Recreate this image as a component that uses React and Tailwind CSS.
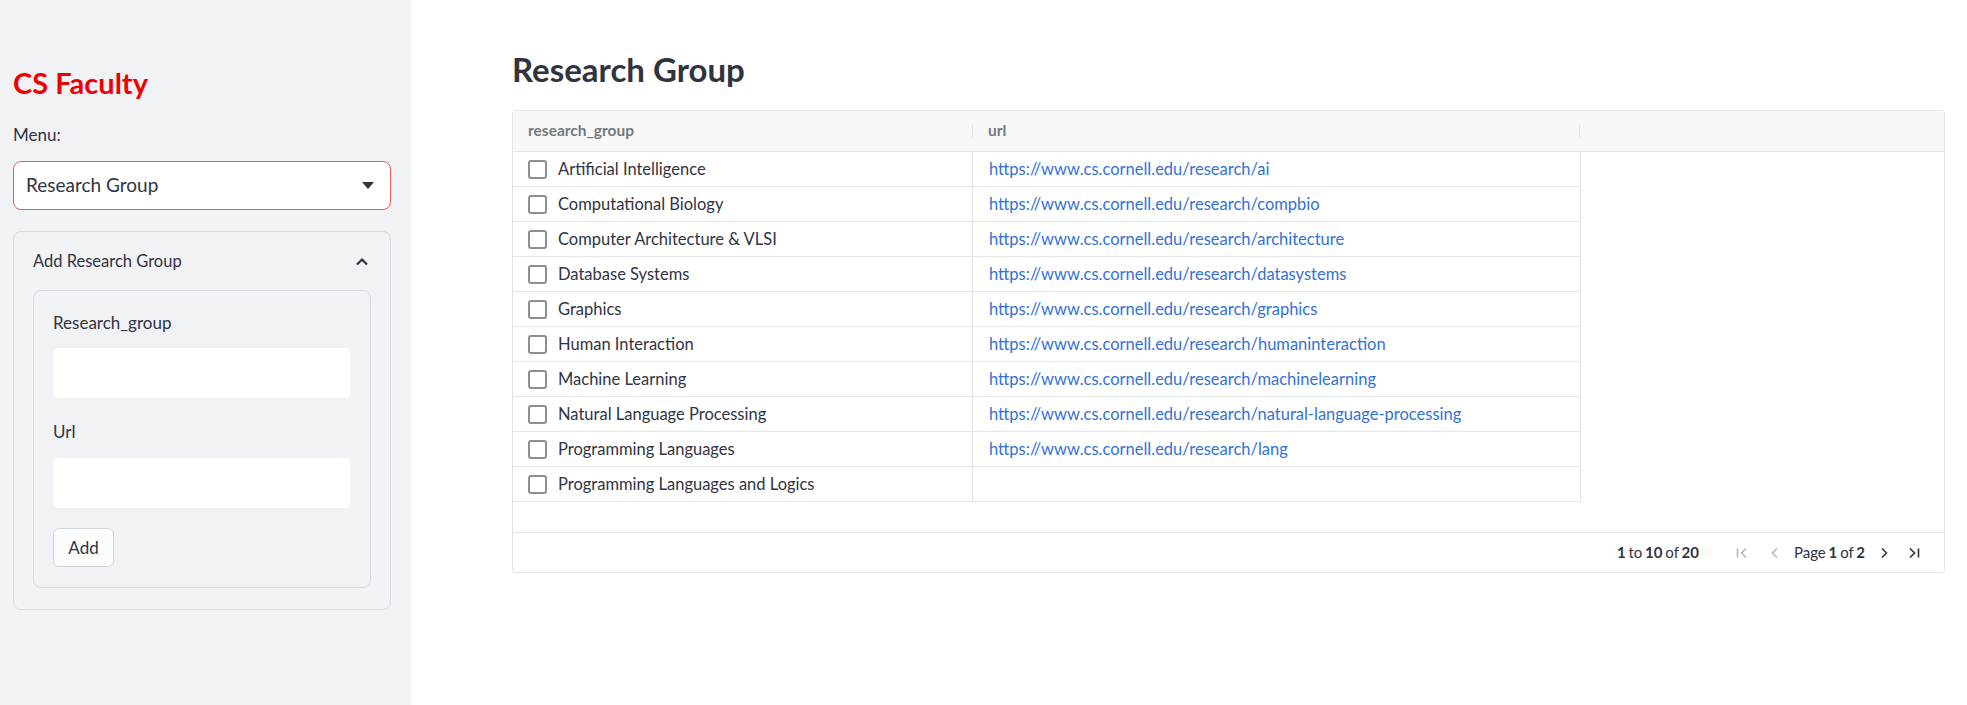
import React, { useState } from 'react';

const groups = [
  { name: 'Artificial Intelligence', url: 'https://www.cs.cornell.edu/research/ai' },
  { name: 'Computational Biology', url: 'https://www.cs.cornell.edu/research/compbio' },
  { name: 'Computer Architecture & VLSI', url: 'https://www.cs.cornell.edu/research/architecture' },
  { name: 'Database Systems', url: 'https://www.cs.cornell.edu/research/datasystems' },
  { name: 'Graphics', url: 'https://www.cs.cornell.edu/research/graphics' },
  { name: 'Human Interaction', url: 'https://www.cs.cornell.edu/research/humaninteraction' },
  { name: 'Machine Learning', url: 'https://www.cs.cornell.edu/research/machinelearning' },
  { name: 'Natural Language Processing', url: 'https://www.cs.cornell.edu/research/natural-language-processing' },
  { name: 'Programming Languages', url: 'https://www.cs.cornell.edu/research/lang' },
  { name: 'Programming Languages and Logics', url: '' },
];

const Sidebar = () => {
  const [open, setOpen] = useState(true);
  const [group, setGroup] = useState('');
  const [url, setUrl] = useState('');

  return (
    <aside className="w-[411px] shrink-0 bg-[#f0f2f6] pl-[13px] pr-[20px] pt-[65px]">
      <h1 className="h-[36px] leading-[36px] text-[29px] font-bold text-[#ee0000]">CS Faculty</h1>

      <div className="mt-[22px] h-[24px] leading-[24px] text-[17px]">Menu:</div>

      {/* Select */}
      <div className="mt-[14px] h-[49px] flex items-center justify-between bg-white border border-[#e35d5d] rounded-[8px] pl-[12px] pr-[16px]">
        <span className="text-[19px]">Research Group</span>
        <svg width="12" height="7" viewBox="0 0 12 7" className="text-[#31333f]">
          <path d="M0 0h12L6 7z" fill="currentColor" />
        </svg>
      </div>

      {/* Expander */}
      <div className="mt-[21px] border border-[#d6d8dd] rounded-[8px]">
        <button
          onClick={() => setOpen(!open)}
          className="w-full h-[58px] flex items-center justify-between pl-[19px] pr-[21px] text-[16.5px] text-[#31333f]"
        >
          <span>Add Research Group</span>
          <svg width="14" height="9" viewBox="0 0 14 9" fill="none">
            <path d="M2 7.5 7 2.5l5 5" stroke="#31333f" strokeWidth="2.2" />
          </svg>
        </button>
        {open && (
          <div className="px-[19px] pb-[21px]">
            <div className="border border-[#d6d8dd] rounded-[8px] px-[19px] pt-[20px] pb-[20px]">
              <div className="h-[24px] leading-[24px] text-[17px]">Research_group</div>
              <input
                value={group}
                onChange={(e) => setGroup(e.target.value)}
                className="mt-[13px] block w-full h-[50px] bg-white rounded-[6px] px-3 outline-none"
              />
              <div className="mt-[22px] h-[24px] leading-[24px] text-[17px]">Url</div>
              <input
                value={url}
                onChange={(e) => setUrl(e.target.value)}
                className="mt-[14px] block w-full h-[50px] bg-white rounded-[6px] px-3 outline-none"
              />
              <button className="mt-[20px] w-[61px] h-[39px] bg-[#fcfcfd] border border-[#d3d5da] rounded-[6px] text-[17px]">
                Add
              </button>
            </div>
          </div>
        )}
      </div>
    </aside>
  );
};

const PagerIcon = ({ d, muted }) => (
  <svg width="16" height="16" viewBox="0 0 16 16" fill="none">
    <path d={d} stroke={muted ? '#b4b7bd' : '#31333f'} strokeWidth="1.6" />
  </svg>
);

const Grid = () => (
  <div className="mt-[19px] border border-[#e3e5e9] rounded-[3px]">
    {/* Header */}
    <div className="h-[41px] flex bg-[#f8f8f9] border-b border-[#e3e5e9] text-[15.5px] font-bold text-[#75787e]">
      <div className="w-[459px] flex items-center pl-[15px]">research_group</div>
      <div className="w-[608px] flex items-center pl-[16px] relative">
        <span className="absolute left-0 top-[13px] h-[14px] w-px bg-[#e3e5e9]" />
        url
        <span className="absolute right-0 top-[13px] h-[14px] w-px bg-[#e3e5e9]" />
      </div>
    </div>

    {/* Rows */}
    <div className="w-[1068px] border-r border-[#e3e5e9]">
      {groups.map((g) => (
        <div key={g.name} className="h-[35px] flex border-b border-[#e3e5e9] text-[16.5px]">
          <div className="w-[459px] flex items-center pl-[15px]">
            <span className="w-[19px] h-[19px] border-2 border-[#8c8e92] rounded-[3px] mr-[11px]" />
            {g.name}
          </div>
          <div className="flex-1 flex items-center pl-[16px] border-l border-[#e3e5e9] text-[#3372d4]">
            {g.url}
          </div>
        </div>
      ))}
    </div>

    <div className="h-[30px]" />

    {/* Footer */}
    <div className="h-[40px] border-t border-[#e3e5e9] flex items-center justify-end pr-[22px] text-[15px] text-[#31333f] [word-spacing:-1px]">
      <span>
        <b>1</b> to <b>10</b> of <b>20</b>
      </span>
      <span className="ml-[35px]">
        <PagerIcon d="M3.5 3.5v9M12 3.5 7.5 8l4.5 4.5" muted />
      </span>
      <span className="ml-[17px]">
        <PagerIcon d="M10 3.5 5.5 8l4.5 4.5" muted />
      </span>
      <span className="ml-[11px]">
        Page <b>1</b> of <b>2</b>
      </span>
      <span className="ml-[11px]">
        <PagerIcon d="M6 3.5 10.5 8 6 12.5" />
      </span>
      <span className="ml-[14px]">
        <PagerIcon d="M4 3.5 8.5 8 4 12.5M12.5 3.5v9" />
      </span>
    </div>
  </div>
);

export default function App() {
  return (
    <div className="min-h-screen h-[705px] flex font-[Lato,sans-serif] text-[#31333f]">
      <Sidebar />
      <main className="flex-1 bg-white pl-[101px] pr-[22px] pt-[47px]">
        <h2 className="h-[44px] leading-[44px] text-[33px] font-bold">Research Group</h2>
        <Grid />
      </main>
    </div>
  );
}
